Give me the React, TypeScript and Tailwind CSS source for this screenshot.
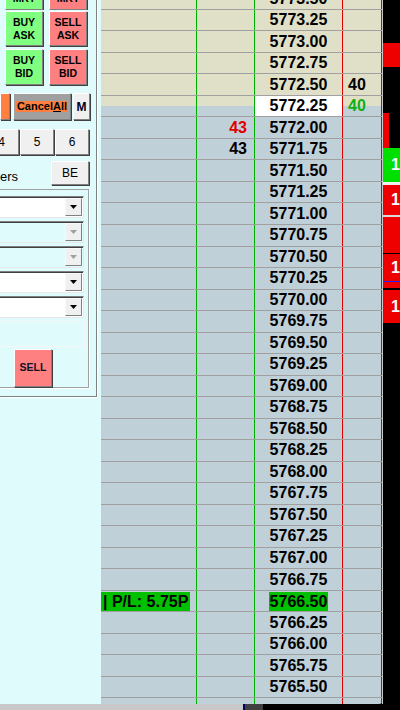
import React from "react";

// price ladder: 5773.50 at the top, stepping down by one tick
const prices = Array.from({ length: 33 }, (_, i) => (5773.5 - i * 0.25).toFixed(2));

const bidQty: Record<string, { v: string; c: string }> = {
  "5772.00": { v: "43", c: "text-[#e00000]" },
  "5771.75": { v: "43", c: "text-black" },
};

const askQty: Record<string, { v: string; c: string }> = {
  "5772.50": { v: "40", c: "text-black" },
  "5772.25": { v: "40", c: "text-[#10b010]" },
};

const lastPrice = "5772.25";
const entryPrice = "5766.50";

function RaisedButton({ className, children }: { className: string; children: React.ReactNode }) {
  return (
    <div
      className={
        "flex flex-col items-center justify-center shrink-0 border border-t-white border-l-white border-b-[#808080] border-r-[#808080] shadow-[1px_1px_0_#404040] " +
        className
      }
    >
      {children}
    </div>
  );
}

function Combo({ disabled }: { disabled?: boolean }) {
  return (
    <div
      className={
        "h-[22px] w-[84px] flex items-center justify-end pr-[1px] border-t border-b border-r border-t-[#808080] border-b-[#e8e8e8] border-r-[#e8e8e8] shadow-[inset_0_1px_0_#404040] " +
        (disabled ? "bg-[#e0fbfb]" : "bg-white")
      }
    >
      <div className="w-[17px] h-[18px] bg-[#f0f0f0] flex items-center justify-center border border-t-[#f8f8f8] border-l-[#f8f8f8] border-b-[#808080] border-r-[#808080]">
        <svg width="7" height="4" viewBox="0 0 7 4">
          <polygon points="0,0 7,0 3.5,4" fill={disabled ? "#a0a0a0" : "#000"} />
        </svg>
      </div>
    </div>
  );
}

function OrderPanel() {
  return (
    <div className="w-[101px] shrink-0 bg-[#e0fbfb] text-black">
      <div className="w-[97px] h-[397px] flex flex-col border-r border-b border-[#808080] shadow-[1px_1px_0_#fff]">
        {/* market buttons, scrolled mostly out of view */}
        <div className="h-[10px] overflow-hidden flex items-end gap-[6px] pl-[5px]">
          <RaisedButton className="w-[38px] h-[36px] bg-[#80ff80] text-[10.5px] font-bold leading-[13px]">
            <span>BUY</span>
            <span>MKT</span>
          </RaisedButton>
          <RaisedButton className="w-[38px] h-[36px] bg-[#ff8080] text-[10.5px] font-bold leading-[13px]">
            <span>SELL</span>
            <span>MKT</span>
          </RaisedButton>
        </div>

        <div className="mt-[1px] h-[35px] flex gap-[6px] pl-[5px]">
          <RaisedButton className="w-[38px] h-full bg-[#80ff80] text-[10.5px] font-bold leading-[13px]">
            <span>BUY</span>
            <span>ASK</span>
          </RaisedButton>
          <RaisedButton className="w-[38px] h-full bg-[#ff8080] text-[10.5px] font-bold leading-[13px]">
            <span>SELL</span>
            <span>ASK</span>
          </RaisedButton>
        </div>

        <div className="mt-[3px] h-[36px] flex gap-[6px] pl-[5px]">
          <RaisedButton className="w-[38px] h-full bg-[#80ff80] text-[10.5px] font-bold leading-[13px]">
            <span>BUY</span>
            <span>BID</span>
          </RaisedButton>
          <RaisedButton className="w-[38px] h-full bg-[#ff8080] text-[10.5px] font-bold leading-[13px]">
            <span>SELL</span>
            <span>BID</span>
          </RaisedButton>
        </div>

        <div className="mt-[8px] h-[27px] flex">
          <RaisedButton className="w-[10px] h-full bg-[#ff8040]">{""}</RaisedButton>
          <RaisedButton className="ml-[3px] w-[58px] h-full bg-[#a0a0a0]">
            <span className="bg-[#ff8040] px-[1px] text-[11px] font-bold leading-[11px]">
              Cancel<u>A</u>ll
            </span>
          </RaisedButton>
          <RaisedButton className="ml-[2px] w-[17px] h-full bg-[#f0f0f0] text-[12px] font-bold text-[#000020]">
            M
          </RaisedButton>
        </div>

        <div className="mt-[9px] h-[26px] flex gap-[1px]">
          <RaisedButton className="-ml-[16px] w-[35px] h-full bg-[#f0f0f0] text-[12px]">4</RaisedButton>
          <RaisedButton className="w-[34px] h-full bg-[#f0f0f0] text-[12px]">5</RaisedButton>
          <RaisedButton className="w-[34px] h-full bg-[#f0f0f0] text-[12px]">6</RaisedButton>
        </div>

        <div className="mt-[6px] h-[24px] flex items-center justify-between pr-[7px]">
          <span className="text-[13px] pt-[8px]">ers</span>
          <RaisedButton className="w-[38px] h-full bg-[#f0f0f0] text-[12px]">BE</RaisedButton>
        </div>

        {/* order settings group */}
        <div className="mt-[4px] w-[89px] flex flex-col border-t border-r border-b border-[#a0a0a0] shadow-[1px_1px_0_#fff] pt-[6px]">
          <div className="flex flex-col gap-[3px]">
            <Combo />
            <Combo disabled />
            <Combo disabled />
            <Combo />
            <Combo />
          </div>
          <div className="mt-[3px] h-[26px] w-[85px] border-t border-r border-b border-[#f6f6f6]" />
          <RaisedButton className="mt-[2px] ml-[14px] w-[38px] h-[38px] bg-[#ff8080] text-[10.5px] font-bold text-[#101028]">
            SELL
          </RaisedButton>
        </div>
      </div>
    </div>
  );
}

function Ladder() {
  return (
    <div className="w-[281px] shrink-0 overflow-hidden rounded-br-[3px] bg-[linear-gradient(to_bottom,#e0e0c8_106px,#c0d0d8_106px)] text-[16px] font-bold text-black">
      <div className="-mt-[11.7px]">
        {prices.map((p) => (
          <div key={p} className="flex h-[21.53px] border-b border-[#a0a0a0]">
            <div className="w-[96px] shrink-0 flex items-center border-r border-[#00b000]">
              {p === entryPrice && (
                <span className="bg-[#00c000] px-[2px] leading-[19px]">| P/L: 5.75P</span>
              )}
            </div>
            <div className="w-[58px] shrink-0 flex items-center justify-end pr-[7px] border-r border-[#00b000]">
              {bidQty[p] && <span className={bidQty[p].c}>{bidQty[p].v}</span>}
            </div>
            <div
              className={
                "w-[88px] shrink-0 flex items-center justify-center border-r border-[#e00000] " +
                (p === lastPrice ? "bg-white" : "")
              }
            >
              <span className={p === entryPrice ? "bg-[#00c000] px-[1px] leading-[19px]" : ""}>{p}</span>
            </div>
            <div className="w-[39px] shrink-0 flex items-center pl-[5px] border-r border-[#e00000]">
              {askQty[p] && <span className={askQty[p].c}>{askQty[p].v}</span>}
            </div>
          </div>
        ))}
        {/* empty tail below the last visible tick */}
        <div className="flex h-[10px]">
          <div className="w-[96px] border-r border-[#00b000]" />
          <div className="w-[58px] border-r border-[#00b000]" />
          <div className="w-[88px] border-r border-[#e00000]" />
          <div className="w-[39px] border-r border-[#e00000]" />
        </div>
      </div>
    </div>
  );
}

// connection / account status tiles on the right edge
function StatusStrip() {
  return (
    <div className="flex-1 flex flex-col bg-black text-white text-[16px] font-bold">
      <div className="h-[43px]" />
      <div className="h-[24px] bg-[#ee0000]" />
      <div className="h-[46px]" />
      <div className="h-[35px] w-[6px] bg-[#ee0000]" />
      <div className="h-[34px] bg-[#00e000] flex items-center pl-[8px]">1</div>
      <div className="h-[3px] bg-[#f0f0f0]" />
      <div className="h-[30px] bg-[#ee0000] flex items-center pl-[8px]">1</div>
      <div className="h-[2px] bg-[#d8d8d8]" />
      <div className="h-[36px] bg-[#ee0000]" />
      <div className="h-[1px]" />
      <div className="h-[34px] bg-[#ee0000] flex flex-col">
        <div className="h-[27px] flex items-center pl-[8px]">1</div>
        <div className="h-[1px] bg-[#2020ff]" />
      </div>
      <div className="h-[2px]" />
      <div className="h-[33px] bg-[#ee0000] flex items-center pl-[8px]">1</div>
    </div>
  );
}

export default function App() {
  return (
    <div className="w-[400px] h-[710px] overflow-hidden flex flex-col bg-black font-['Liberation_Sans',Arial,sans-serif]">
      <div className="flex h-[704px]">
        <OrderPanel />
        <Ladder />
        <div className="w-[1px] shrink-0 bg-[#c8c8c8]" />
        <StatusStrip />
      </div>
      <div className="flex h-[6px]">
        <div className="w-[243px] bg-[#c8c8c8]" />
        <div className="w-[2px] bg-[#000060]" />
        <div className="w-[18px] bg-[#404040]" />
        <div className="flex-1 bg-black" />
      </div>
    </div>
  );
}
